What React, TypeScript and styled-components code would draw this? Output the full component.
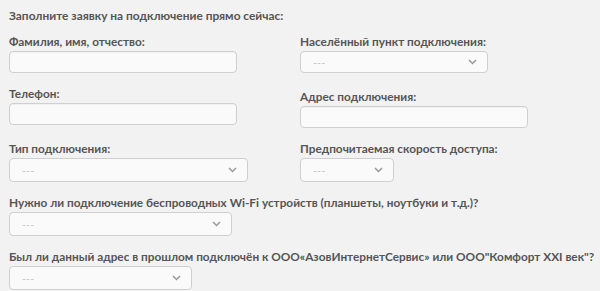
import React from 'react';
import styled, { createGlobalStyle } from 'styled-components';

const GlobalStyle = createGlobalStyle`
  html, body {
    margin: 0;
    background: #f2f2f2;
  }
  body {
    font-family: Lato, 'Open Sans', 'Liberation Sans', sans-serif;
    color: #555;
  }
`;

const Form = styled.form`
  padding: 8px 9px 0;
`;

const Title = styled.div`
  font-size: 11.9px;
  font-weight: 700;
  line-height: 16px;
  margin-bottom: 10px;
  white-space: nowrap;
`;

const Grid = styled.div`
  display: grid;
  grid-template-columns: 291px 1fr;
`;

const Field = styled.div<{ $shift?: number }>`
  margin-bottom: 13px;
  margin-top: ${(p) => p.$shift || 0}px;
  &:last-child {
    margin-bottom: 0;
  }
`;

const Label = styled.label`
  display: block;
  font-size: 11.8px;
  font-weight: 700;
  line-height: 16px;
  margin-bottom: 1px;
  white-space: nowrap;
`;

const Input = styled.input<{ $w: number }>`
  display: block;
  box-sizing: border-box;
  width: ${(p) => p.$w}px;
  height: 22px;
  border: 1px solid #cfcfcf;
  border-radius: 4px;
  background: #fafafa;
  box-shadow: inset 0 1px 1px rgba(0, 0, 0, 0.04);
  outline: none;
`;

const SelectBox = styled.div<{ $w: number; $h: number }>`
  box-sizing: border-box;
  width: ${(p) => p.$w}px;
  height: ${(p) => p.$h}px;
  border: 1px solid #cfcfcf;
  border-radius: 4px;
  background: #fafafa;
  display: flex;
  align-items: center;
  justify-content: space-between;
  padding: 0 10px 0 12px;
`;

const Placeholder = styled.span`
  font-size: 11px;
  color: #c8c8c8;
  line-height: 1;
`;

const Chevron = () => (
  <svg width="9" height="6" viewBox="0 0 9 6">
    <path d="M1 1l3.5 3.5L8 1" fill="none" stroke="#999" strokeWidth="1.5" />
  </svg>
);

const Select = ({ w, h = 24 }: { w: number; h?: number }) => (
  <SelectBox $w={w} $h={h}>
    <Placeholder>---</Placeholder>
    <Chevron />
  </SelectBox>
);

export default function App() {
  return (
    <>
      <GlobalStyle />
      <Form>
        <Title>Заполните заявку на подключение прямо сейчас:</Title>
        <Grid>
          <Field>
            <Label>Фамилия, имя, отчество:</Label>
            <Input $w={228} />
          </Field>
          <Field>
            <Label>Населённый пункт подключения:</Label>
            <Select w={188} h={22} />
          </Field>
          <Field>
            <Label>Телефон:</Label>
            <Input $w={228} />
          </Field>
          <Field $shift={3}>
            <Label>Адрес подключения:</Label>
            <Input $w={228} />
          </Field>
          <Field>
            <Label>Тип подключения:</Label>
            <Select w={239} />
          </Field>
          <Field>
            <Label>Предпочитаемая скорость доступа:</Label>
            <Select w={94} />
          </Field>
        </Grid>
        <Field>
          <Label>
            Нужно ли подключение беспроводных Wi-Fi устройств (планшеты, ноутбуки и т.д.)?
          </Label>
          <Select w={223} />
        </Field>
        <Field>
          <Label>
            Был ли данный адрес в прошлом подключён к ООО«АзовИнтернетСервис» или ООО"Комфорт XXI век"?
          </Label>
          <Select w={183} />
        </Field>
      </Form>
    </>
  );
}
